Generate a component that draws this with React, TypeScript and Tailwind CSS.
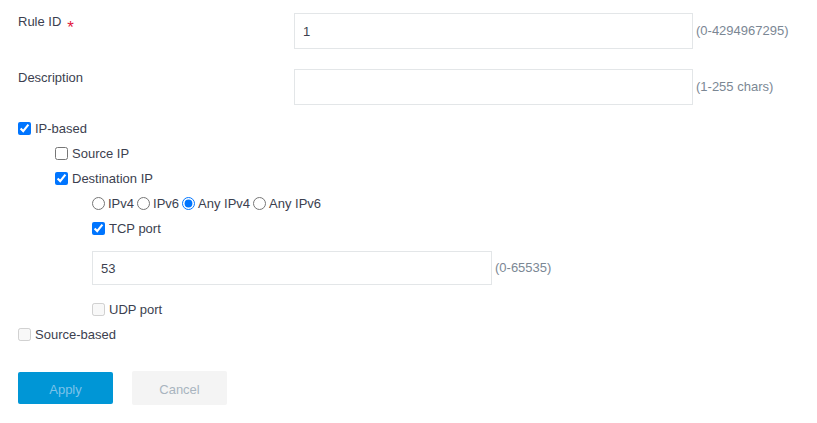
import React from "react";

function Check({
  label,
  checked,
  disabled
}: {
  label: string;
  checked?: boolean;
  disabled?: boolean;
}) {
  return (
    <label className="flex h-[25px] items-center gap-[4px]">
      <input
        type="checkbox"
        defaultChecked={checked}
        disabled={disabled}
        className="m-0 h-[13px] w-[13px]"
      />
      <span>{label}</span>
    </label>
  );
}

function Radio({ label, checked }: { label: string; checked?: boolean }) {
  return (
    <label className="flex items-center gap-[3px]">
      <input
        type="radio"
        name="ipver"
        defaultChecked={checked}
        className="m-0 h-[13px] w-[13px]"
      />
      <span>{label}</span>
    </label>
  );
}

function FieldRow({
  label,
  required,
  value,
  hint
}: {
  label: string;
  required?: boolean;
  value: string;
  hint: string;
}) {
  return (
    <div className="flex">
      <div className="flex w-[276px] items-start pt-[1px] leading-[16px]">
        <span>{label}</span>
        {required ? (
          <span className="ml-[6px] mt-[6px] text-[17px] leading-[16px] text-[#e2193d]">*</span>
        ) : null}
      </div>
      <input
        type="text"
        defaultValue={value}
        className="h-[36px] w-[399px] border border-[#e3e6e8] px-[8px] text-[#3c3f4f] outline-none"
      />
      <span className="ml-[3px] self-center text-[#7b8794]">{hint}</span>
    </div>
  );
}

export default function App() {
  return (
    <main
      className="min-h-screen bg-white pl-[18px] pt-[13px] text-[13px] text-[#3c3f4f]"
      style={{ fontFamily: '"Liberation Sans", Arial, sans-serif' }}
    >
      <div className="flex flex-col gap-[20px]">
        <FieldRow label="Rule ID" required value="1" hint="(0-4294967295)" />
        <FieldRow label="Description" value="" hint="(1-255 chars)" />
      </div>

      <div className="mt-[11px]">
        <Check label="IP-based" checked />
        <div className="pl-[37px]">
          <Check label="Source IP" />
          <Check label="Destination IP" checked />
          <div className="pl-[37px]">
            <div className="flex h-[25px] items-center gap-[3px]">
              <Radio label="IPv4" />
              <Radio label="IPv6" />
              <Radio label="Any IPv4" checked />
              <Radio label="Any IPv6" />
            </div>
            <Check label="TCP port" checked />
            <div className="mt-[10px] flex items-center">
              <input
                type="text"
                defaultValue="53"
                className="h-[34px] w-[400px] border border-[#e3e6e8] px-[8px] text-[#3c3f4f] outline-none"
              />
              <span className="ml-[3px] text-[#7b8794]">(0-65535)</span>
            </div>
            <div className="mt-[12px]">
              <Check label="UDP port" disabled />
            </div>
          </div>
        </div>
        <Check label="Source-based" disabled />
      </div>

      <div className="mt-[24px] flex items-center gap-[19px]">
        <button
          type="button"
          className="h-[32px] w-[95px] rounded-[2px] bg-[#0096d6] pt-[3px] text-[#7cc3ea]"
        >
          Apply
        </button>
        <button
          type="button"
          className="h-[34px] w-[95px] rounded-[2px] bg-[#f4f4f4] pt-[3px] text-[#a9b4bf]"
        >
          Cancel
        </button>
      </div>
    </main>
  );
}
